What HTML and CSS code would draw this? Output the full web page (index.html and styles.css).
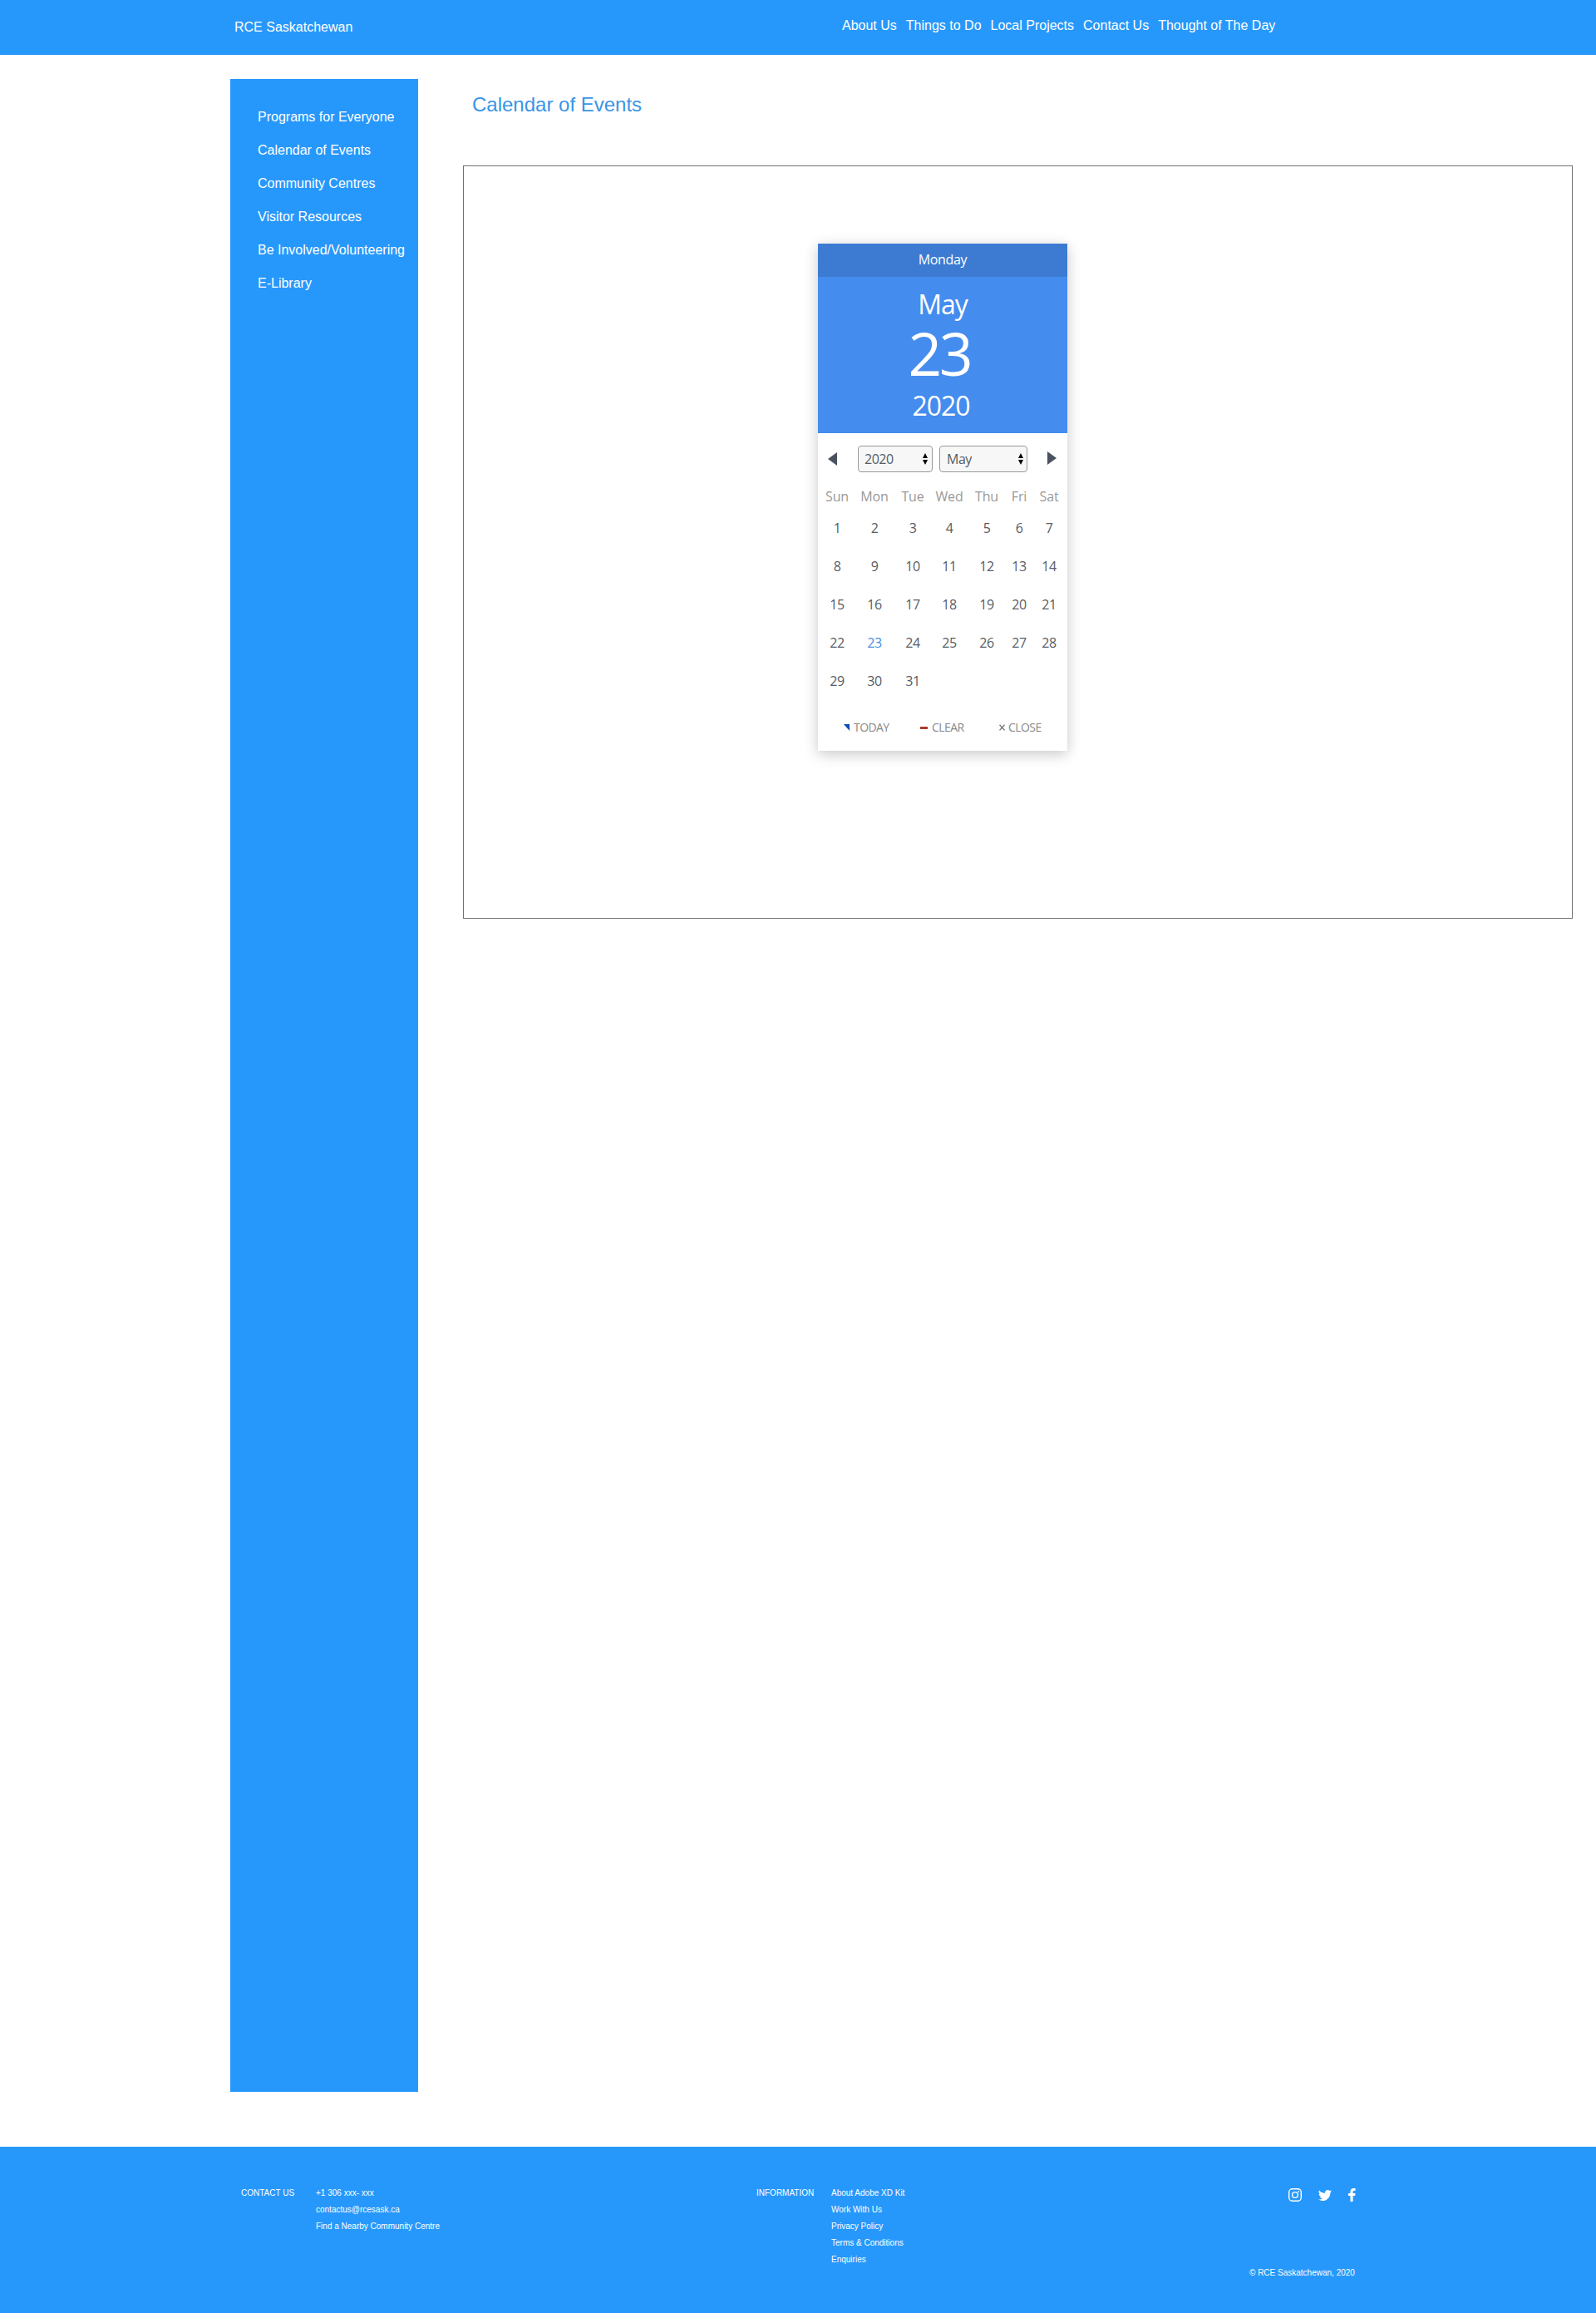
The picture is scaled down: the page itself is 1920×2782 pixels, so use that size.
FILE: index.html
```html
<!DOCTYPE html>
<html lang="en">
<head>
<meta charset="utf-8">
<title>RCE Saskatchewan - Calendar of Events</title>
<link rel="stylesheet" href="styles.css">
</head>
<body>
<header class="site-header">
  <a class="brand">RCE Saskatchewan</a>
  <nav class="main-nav">
    <a>About Us</a><a>Things to Do</a><a>Local Projects</a><a>Contact Us</a><a>Thought of The Day</a>
  </nav>
</header>
<div class="layout">
  <aside class="sidebar">
    <a>Programs for Everyone</a>
    <a>Calendar of Events</a>
    <a>Community Centres</a>
    <a>Visitor Resources</a>
    <a>Be Involved/Volunteering</a>
    <a>E-Library</a>
  </aside>
  <main class="content">
    <h1>Calendar of Events</h1>
    <section class="panel">
      <div class="calendar">
        <div class="weekday">Monday</div>
        <div class="date">
          <div class="month">May</div>
          <div class="day">23</div>
          <div class="year">2020</div>
        </div>
        <div class="picker">
          <svg class="prev" width="11" height="16" viewBox="0 0 11 16"><path d="M11 0v16L0 8z" fill="#4b535f"/></svg>
          <div class="select select-year">2020<svg width="6" height="14" viewBox="0 0 6 14"><path d="M3 0l3 6H0zM3 14L0 8h6z"/></svg></div>
          <div class="select select-month">May<svg width="6" height="14" viewBox="0 0 6 14"><path d="M3 0l3 6H0zM3 14L0 8h6z"/></svg></div>
          <svg class="next" width="11" height="16" viewBox="0 0 11 16"><path d="M0 0v16l11-8z" fill="#4b535f"/></svg>
        </div>
        <div class="grid names"><span>Sun</span><span>Mon</span><span>Tue</span><span>Wed</span><span>Thu</span><span>Fri</span><span>Sat</span></div>
        <div class="grid days">
          <span>1</span><span>2</span><span>3</span><span>4</span><span>5</span><span>6</span><span>7</span>
          <span>8</span><span>9</span><span>10</span><span>11</span><span>12</span><span>13</span><span>14</span>
          <span>15</span><span>16</span><span>17</span><span>18</span><span>19</span><span>20</span><span>21</span>
          <span>22</span><span class="today">23</span><span>24</span><span>25</span><span>26</span><span>27</span><span>28</span>
          <span>29</span><span>30</span><span>31</span>
        </div>
        <div class="actions">
          <span class="act-today"><svg width="12" height="8" viewBox="0 0 12 8"><path d="M0 0h7v8z" fill="#0f4cb5"/></svg>TODAY</span>
          <span class="act-clear"><svg width="14" height="8" viewBox="0 0 14 8"><path d="M0 3h9v3H0z" fill="#a93a2e"/></svg>CLEAR</span>
          <span class="act-close"><svg width="11" height="8" viewBox="0 0 11 8"><path d="M.5 .8l6 6.600M6.500 .8l-6 6.600" stroke="#777" stroke-width="1.400" fill="none"/></svg>CLOSE</span>
        </div>
      </div>
    </section>
  </main>
</div>
<footer class="site-footer">
  <div class="foot-title contact">CONTACT US</div>
  <div class="foot-links contact-links"><a>+1 306 xxx- xxx</a><a>contactus@rcesask.ca</a><a>Find a Nearby Community Centre</a></div>
  <div class="foot-title">INFORMATION</div>
  <div class="foot-links info-links"><a>About Adobe XD Kit</a><a>Work With Us</a><a>Privacy Policy</a><a>Terms &amp; Conditions</a><a>Enquiries</a></div>
  <div class="foot-end">
    <div class="social">
      <svg width="16" height="16" viewBox="0 0 16 16" fill="none" stroke="#fff" stroke-width="1.400"><rect x=".7" y=".7" width="14.600" height="14.600" rx="4"/><circle cx="8" cy="8" r="3.400"/><circle cx="12.200" cy="3.800" r=".9" fill="#fff" stroke="none"/></svg>
      <svg width="16" height="13" viewBox="0 0 24 19.500" fill="#fff"><path d="M24 2.300a9.800 9.800 0 0 1-2.830.78A4.930 4.930 0 0 0 23.340.36a9.900 9.900 0 0 1-3.130 1.200A4.920 4.920 0 0 0 11.820 6 13.980 13.980 0 0 1 1.670.9a4.930 4.930 0 0 0 1.520 6.570A4.900 4.900 0 0 1 .96 6.850a4.930 4.930 0 0 0 3.950 4.900 4.900 4.900 0 0 1-2.220.080 4.930 4.930 0 0 0 4.600 3.420A9.870 9.870 0 0 1 0 17.290a13.940 13.940 0 0 0 7.550 2.210c9.140 0 14.300-7.720 13.980-14.650A10 10 0 0 0 24 2.300z"/></svg>
      <svg width="9" height="16" viewBox="0 0 9 16" fill="#fff"><path d="M2.500 16V9H0V6h2.500V4.100C2.500 1.500 4 0 6.400 0 7.500 0 8.700.2 8.700.2v2.600H7.400C6 2.800 5.600 3.600 5.600 4.500V6h3l-.5 3H5.600v7z"/></svg>
    </div>
    <div class="copyright">© RCE Saskatchewan, 2020</div>
  </div>
</footer>
</body>
</html>
```
FILE: styles.css
```css
* { box-sizing: border-box; }
body { margin: 0; background: #fff; font-family: "Liberation Sans", Arial, sans-serif; font-size: 16px; }
svg { display: block; flex: none; }

.site-header { display: flex; height: 66px; padding-left: 282px; background: #2798fb; color: #fff; line-height: 20px; }
.brand { width: 731px; padding-top: 23px; }
.main-nav { display: flex; gap: 11px; padding-top: 21px; white-space: nowrap; }

.layout { display: flex; height: 2516px; padding: 29px 28px 66px 277px; }
.sidebar { display: flex; flex-direction: column; width: 226px; padding: 26px 0 0 33px; background: #2798fb; color: #fff; line-height: 40px; white-space: nowrap; }
.content { width: 1335px; margin-left: 54px; }
.content h1 { height: 104px; margin: 0; padding: 15px 0 0 11px; font-size: 24px; font-weight: 400; line-height: 32px; color: #3a94e6; }
.panel { height: 906px; padding: 93px 0 0 426px; border: 1px solid #707070; }

.calendar { width: 300px; height: 610px; background: #fff; box-shadow: 0 4px 16px rgba(0, 0, 0, .22); font-family: "Open Sans", "Noto Sans", sans-serif; letter-spacing: -.03em; color: #565c66; }
.weekday { height: 40px; background: #3d7bd2; color: #fff; line-height: 39px; text-align: center; letter-spacing: -.02em; }
.date { height: 188px; padding-top: 11px; background: #458cef; color: #fff; text-align: center; font-size: 32px; letter-spacing: -.033em; }
.month { line-height: 43px; height: 41px; }
.day { height: 75px; font-size: 71px; line-height: 79px; padding-right: 8px; letter-spacing: -.045em; }
.year { line-height: 55px; padding-right: 4px; }
.picker { display: flex; height: 62px; padding: 15px 13px 0 12px; }
.prev { margin-top: 8px; }
.next { margin: 7px 0 0 24px; }
.select { display: flex; align-items: center; justify-content: space-between; height: 32px; border: 1px solid #999; border-radius: 4px; background: #f7f7f7; line-height: 31px; padding: 0 5px 0 7px; }
.select-year { width: 90px; margin-left: 25px; }
.select-month { width: 106px; margin-left: 8px; padding: 0 4px 0 8px; }
.grid { display: grid; grid-template-columns: 46px 44px 48px 40px 50px 28px 44px; text-align: center; }
.names { height: 28px; line-height: 28px; color: #999; letter-spacing: -.01em; }
.days { grid-auto-rows: 46px; line-height: 48px; }
.today { color: #4a8fdd; }
.actions { display: flex; height: 24px; margin-top: 24px; padding-left: 31px; font-size: 14px; line-height: 20px; letter-spacing: -.04em; color: #888; }
.actions span { display: flex; align-items: flex-start; }
.actions svg { margin-top: 6px; }
.act-today { width: 92px; }
.act-clear { width: 95px; }

.site-footer { display: flex; height: 200px; padding: 46px 0 0 290px; background: #2798fb; color: #fff; font-size: 10px; line-height: 20px; white-space: nowrap; }
.foot-title { width: 90px; }
.foot-links { display: flex; flex-direction: column; }
.contact-links { width: 530px; }
.info-links { width: 503px; }
.foot-end { width: 130px; }
.social { display: flex; align-items: center; height: 16px; margin: 4px 0 0 47px; gap: 20px; }
.copyright { margin-top: 76px; }
```
